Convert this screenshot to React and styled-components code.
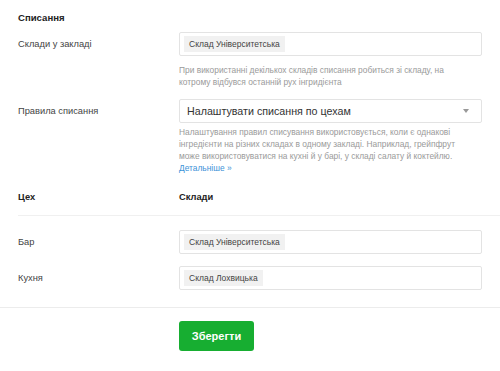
import React from "react";
import styled, { createGlobalStyle } from "styled-components";

const GlobalStyle = createGlobalStyle`
  body {
    margin: 0;
    background: #fff;
    font-family: "Liberation Sans", Arial, sans-serif;
    color: #333;
  }
`;

const Page = styled.div`
  width: 500px;
  padding-top: 12px;
`;

const Section = styled.div`
  padding: 0 18px;
`;

const Title = styled.div`
  font-size: 9.6px;
  font-weight: bold;
  line-height: 12px;
  color: #222;
  margin-bottom: 8px;
`;

const Row = styled.div`
  display: grid;
  grid-template-columns: 161px 303px;
  margin-bottom: ${(p) => p.gap || 0}px;
`;

const Label = styled.div`
  font-size: 9.3px;
  line-height: 24px;
  color: #444;
`;

const Field = styled.div`
  display: flex;
  flex-direction: column;
`;

const TagInput = styled.div`
  box-sizing: border-box;
  height: 24px;
  border: 1px solid #e3e3e3;
  border-radius: 2px;
  padding: 3px 4px;
  display: flex;
  align-items: center;
`;

const Tag = styled.span`
  background: #f1f1f1;
  font-size: 8.5px;
  line-height: 16px;
  padding: 0 5px;
  color: #444;
`;

const Select = styled.div`
  box-sizing: border-box;
  height: 24px;
  border: 1px solid #e3e3e3;
  border-radius: 2px;
  padding: 0 12px 0 7px;
  display: flex;
  align-items: center;
  justify-content: space-between;
  font-size: 10.7px;
  color: #333;
`;

const Caret = styled.span`
  width: 0;
  height: 0;
  border-left: 3.5px solid transparent;
  border-right: 3.5px solid transparent;
  border-top: 4px solid #999;
`;

const Help = styled.div`
  margin-top: ${(p) => p.top}px;
  font-size: 8.4px;
  line-height: ${(p) => p.lh}px;
  color: #9a9a9a;
  white-space: nowrap;
`;

const Link = styled.a`
  display: block;
  color: #3d92d8;
  text-decoration: none;
`;

const Table = styled.div`
  padding-left: 18px;
  margin-top: 17px;
`;

const HeadRow = styled.div`
  display: grid;
  grid-template-columns: 161px 303px;
  padding-bottom: 12px;
  border-bottom: 1px solid #f0f0f0;
  font-size: 9.3px;
  font-weight: bold;
  line-height: 12px;
  color: #222;
`;

const Body = styled.div`
  padding: 14px 18px 17px 0;
  display: flex;
  flex-direction: column;
  gap: 12px;
`;

const Footer = styled.div`
  border-top: 1px solid #ececec;
  padding: 13px 0 0 179px;
`;

const SaveButton = styled.button`
  width: 75px;
  height: 30px;
  border: none;
  border-radius: 3px;
  background: #17ae31;
  color: #fff;
  font-family: inherit;
  font-size: 11px;
  font-weight: bold;
`;

const workshops = [
  { name: "Бар", store: "Склад Університетська" },
  { name: "Кухня", store: "Склад Лохвицька" },
];

export default function App() {
  return (
    <Page>
      <GlobalStyle />
      <Section>
        <Title>Списання</Title>
        <Row gap={11}>
          <Label>Склади у закладі</Label>
          <Field>
            <TagInput>
              <Tag>Склад Університетська</Tag>
            </TagInput>
            <Help top={9} lh={11.5}>
              При використанні декількох складів списання робиться зі складу, на
              <br />
              котрому відбувся останній рух інгридієнта
            </Help>
          </Field>
        </Row>
        <Row>
          <Label>Правила списання</Label>
          <Field>
            <Select>
              Налаштувати списання по цехам
              <Caret />
            </Select>
            <Help top={3} lh={12}>
              Налаштування правил списування використовується, коли є однакові
              <br />
              інгредієнти на різних складах в одному закладі. Наприклад, грейпфрут
              <br />
              може використовуватися на кухні й у барі, у складі салату й коктейлю.
              <Link href="#">Детальніше »</Link>
            </Help>
          </Field>
        </Row>
      </Section>
      <Table>
        <HeadRow>
          <div>Цех</div>
          <div>Склади</div>
        </HeadRow>
        <Body>
          {workshops.map((w) => (
            <Row key={w.name}>
              <Label>{w.name}</Label>
              <TagInput>
                <Tag>{w.store}</Tag>
              </TagInput>
            </Row>
          ))}
        </Body>
      </Table>
      <Footer>
        <SaveButton>Зберегти</SaveButton>
      </Footer>
    </Page>
  );
}
